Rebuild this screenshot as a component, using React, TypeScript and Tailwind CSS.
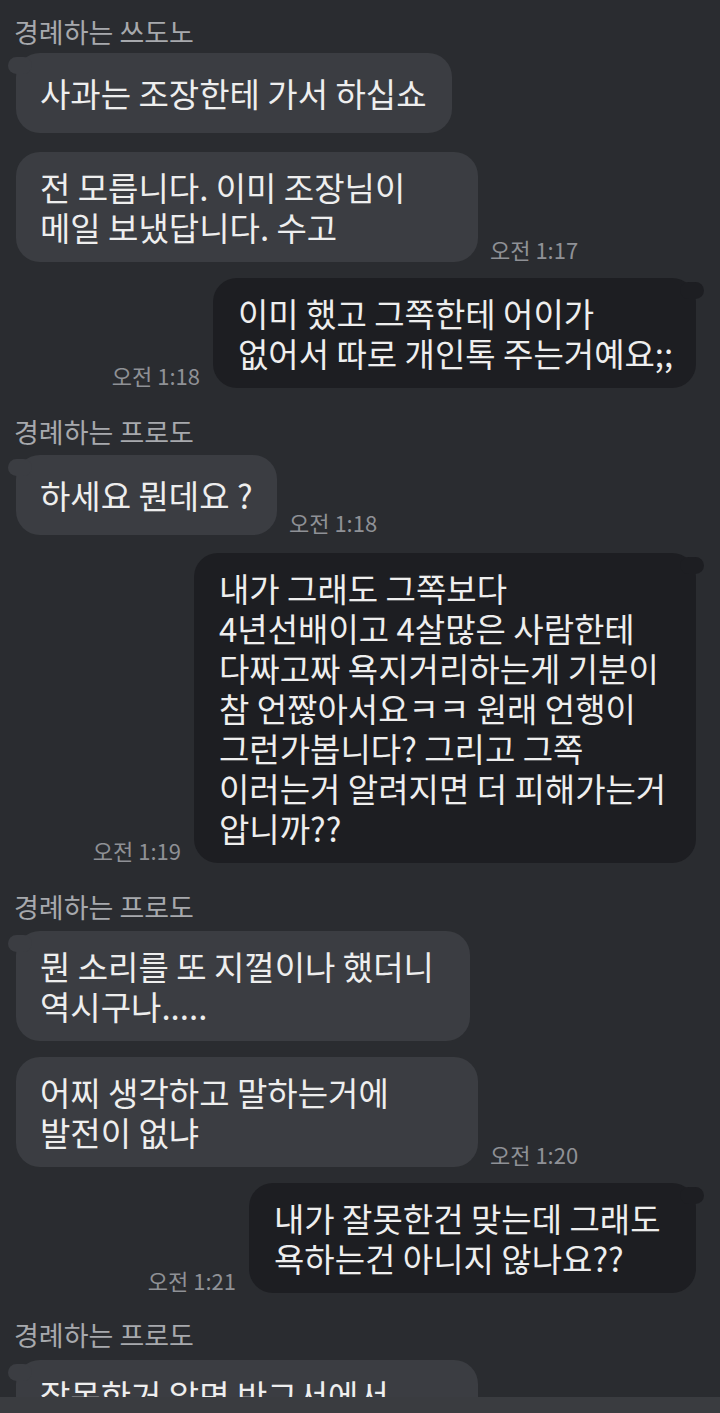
import React from "react";

const RB = "bg-[#3b3d42]";
const SB = "bg-[#1d1e22]";

function Name({ children, mt }: { children: React.ReactNode; mt: string }) {
  return (
    <div className={`${mt} pl-[14px] text-[27px] leading-[28px] text-[#a7a9ad]`}>{children}</div>
  );
}

function Received({
  lines,
  width,
  mt,
  time,
  tail,
  single,
}: {
  lines: string[];
  width: string;
  mt: string;
  time?: string;
  tail?: boolean;
  single?: boolean;
}) {
  return (
    <div className={`${mt} flex items-end pl-[16px]`}>
      <div
        className={`relative ${width} ${RB} rounded-[24px] px-[24px] ${single ? "py-[20px]" : "py-[15px]"} text-[33px] leading-[40px] text-[#eeeeee] whitespace-nowrap`}
      >
        {tail && <span className={`absolute -left-[8px] top-[4px] h-[17px] w-[24px] rounded-full ${RB}`} />}
        <div className="relative">
          {lines.map((l, i) => (
            <div key={i}>{l}</div>
          ))}
        </div>
      </div>
      {time && <span className="ml-[12px] mb-[1px] text-[22px] leading-[24px] text-[#8f9196] whitespace-nowrap">{time}</span>}
    </div>
  );
}

function Sent({ lines, width, mt, time }: { lines: string[]; width: string; mt: string; time: string }) {
  return (
    <div className={`${mt} flex items-end justify-end pr-[24px]`}>
      <span className="mr-[13px] mb-[1px] text-[22px] leading-[24px] text-[#8f9196] whitespace-nowrap">{time}</span>
      <div
        className={`relative ${width} ${SB} rounded-[24px] px-[25px] py-[15px] text-[33px] leading-[40px] text-[#eeeeee] whitespace-nowrap`}
      >
        <span className={`absolute -right-[8px] top-[4px] h-[17px] w-[24px] rounded-full ${SB}`} />
        <div className="relative">
          {lines.map((l, i) => (
            <div key={i}>{l}</div>
          ))}
        </div>
      </div>
    </div>
  );
}

export default function App() {
  return (
    <div className="flex h-[1413px] w-[720px] flex-col overflow-hidden bg-[#2a2c30] font-['Noto_Sans_CJK_KR','Noto_Sans',sans-serif]">
      <div className="flex-1 overflow-hidden">
        <Name mt="mt-[18px]">경례하는 쓰도노</Name>
        <Received mt="mt-[7px]" width="w-[436px]" lines={["사과는 조장한테 가서 하십쇼"]} tail single />
        <Received
          mt="mt-[19px]"
          width="w-[462px]"
          lines={["전 모릅니다. 이미 조장님이", "메일 보냈답니다. 수고"]}
          time="오전 1:17"
        />
        <Sent
          mt="mt-[16px]"
          width="w-[483px]"
          lines={["이미 했고 그쪽한테 어이가", "없어서 따로 개인톡 주는거예요;;"]}
          time="오전 1:18"
        />
        <Name mt="mt-[30px]">경례하는 프로도</Name>
        <Received mt="mt-[9px]" width="w-[261px]" lines={["하세요 뭔데요 ?"]} tail single time="오전 1:18" />
        <Sent
          mt="mt-[18px]"
          width="w-[502px]"
          lines={[
            "내가 그래도 그쪽보다",
            "4년선배이고 4살많은 사람한테",
            "다짜고짜 욕지거리하는게 기분이",
            "참 언짢아서요ㅋㅋ 원래 언행이",
            "그런가봅니다? 그리고 그쪽",
            "이러는거 알려지면 더 피해가는거",
            "압니까??",
          ]}
          time="오전 1:19"
        />
        <Name mt="mt-[30px]">경례하는 프로도</Name>
        <Received
          mt="mt-[10px]"
          width="w-[454px]"
          lines={["뭔 소리를 또 지껄이나 했더니", "역시구나....."]}
          tail
        />
        <Received
          mt="mt-[16px]"
          width="w-[462px]"
          lines={["어찌 생각하고 말하는거에", "발전이 없냐"]}
          time="오전 1:20"
        />
        <Sent
          mt="mt-[16px]"
          width="w-[447px]"
          lines={["내가 잘못한건 맞는데 그래도", "욕하는건 아니지 않나요??"]}
          time="오전 1:21"
        />
        <Name mt="mt-[28px]">경례하는 프로도</Name>
        <Received
          mt="mt-[11px]"
          width="w-[462px]"
          lines={["잘못한거 알면 반그서에서", "사과하세요"]}
          tail
        />
      </div>
      <div className="h-[16px] bg-[#3a3c40]" />
    </div>
  );
}
